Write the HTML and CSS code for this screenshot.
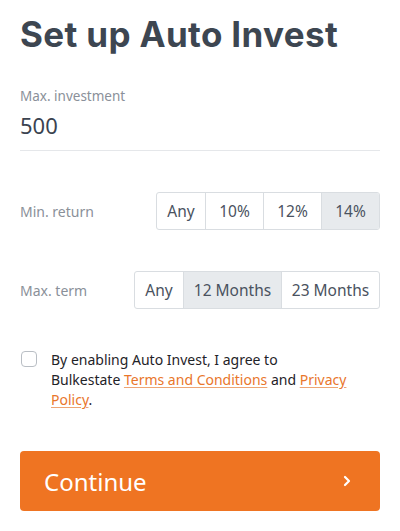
FILE: index.html
```html
<!DOCTYPE html>
<html>
<head>
<meta charset="utf-8">
<link rel="stylesheet" href="styles.css">
</head>
<body>
<div class="page">
  <h1 class="title">Set up Auto Invest</h1>
  <div class="field">
    <div class="field-label">Max. investment</div>
    <div class="field-value">500</div>
  </div>
  <div class="row row-return">
    <div class="row-label">Min. return</div>
    <div class="seg">
      <div class="seg-item w-any">Any</div>
      <div class="seg-item w-pct">10%</div>
      <div class="seg-item w-pct">12%</div>
      <div class="seg-item w-pct active">14%</div>
    </div>
  </div>
  <div class="row row-term">
    <div class="row-label">Max. term</div>
    <div class="seg">
      <div class="seg-item w-any">Any</div>
      <div class="seg-item w-mon active">12 Months</div>
      <div class="seg-item w-mon">23 Months</div>
    </div>
  </div>
  <label class="agree">
    <span class="box"></span>
    <span class="agree-text">By enabling Auto Invest, I agree to<br>Bulkestate <a href="#">Terms and Conditions</a> and <a href="#">Privacy Policy</a>.</span>
  </label>
  <button class="cta">
    <span>Continue</span>
    <svg width="10" height="12" viewBox="0 0 10 12"><path d="M3 2 L7 6 L3 10" fill="none" stroke="#fff" stroke-width="2.2" stroke-linecap="round" stroke-linejoin="round"/></svg>
  </button>
</div>
</body>
</html>
```
FILE: styles.css
```css
* { box-sizing: border-box; }
body { margin: 0; background: #fff; font-family: "Noto Sans", "Open Sans", sans-serif; }
.page { padding: 12px 20px 0 20px; display: flex; flex-direction: column; }
.title { margin: 0; font-family: Inter, sans-serif; font-weight: 700; font-size: 35px; line-height: 44px; color: #3d4651; letter-spacing: 0.35px; }
.field { margin-top: 31px; border-bottom: 1px solid #e5e7ea; padding-bottom: 10px; }
.field-label { font-size: 13.5px; color: #8a9099; line-height: 18px; }
.field-value { font-size: 22px; color: #3b4350; line-height: 30px; margin-top: 5px; }
.row { display: flex; align-items: center; justify-content: space-between; }
.row-return { margin-top: 41px; }
.row-term { margin-top: 41px; }
.row-label { font-size: 14px; color: #8a9099; }
.seg { display: flex; border: 1px solid #d9dde1; border-radius: 3px; height: 38px; overflow: hidden; }
.seg-item { display: flex; align-items: center; justify-content: center; font-size: 15.5px; color: #4a5260; border-left: 1px solid #d9dde1; }
.seg-item:first-child { border-left: 0; }
.seg-item.active { background: #e7eaed; }
.w-any { width: 48px; }
.w-pct { width: 58px; }
.w-mon { width: 98px; }
.agree { display: flex; align-items: flex-start; margin-top: 41px; gap: 14px; }
.box { flex: 0 0 16px; width: 16px; height: 16px; border: 1px solid #b9bec4; border-radius: 4px; margin-top: 1px; margin-left: 1px; }
.agree-text { font-size: 14px; line-height: 20px; color: #1f2328; }
.agree-text a { color: #e9762b; text-decoration: underline; text-decoration-color: #eea574; text-underline-offset: 2px; }
.cta { margin-top: 41px; height: 60px; border: 0; border-radius: 4px; background: #ef7422; color: #fff; display: flex; align-items: center; justify-content: space-between; padding: 0 28px 0 24px; font-family: "Noto Sans", sans-serif; font-size: 24px; cursor: pointer; }
```
